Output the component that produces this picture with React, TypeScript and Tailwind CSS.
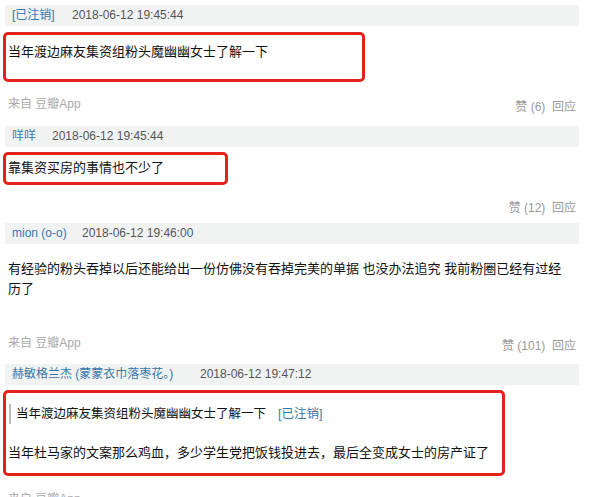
export default function App() {
  const font = { fontFamily: '"Liberation Sans", Arial, "Noto Sans CJK SC", sans-serif' };
  const Band = ({ name, date, nameW }: { name: string; date: string; nameW?: string }) => (
    <div className="ml-[2px] w-[574px] h-[21px] bg-[#f1f3f3] flex items-center pl-[7px] text-[12px] leading-[21px]">
      <span className={`text-[#3a77aa] whitespace-nowrap ${nameW ?? ""}`}>{name}</span>
      <span className="text-[#555]">{date}</span>
    </div>
  );
  const From = () => <span className="text-[#aaa] text-[12px] leading-[18px] pl-[5px]">来自 豆瓣App</span>;
  const Like = ({ n }: { n: string }) => (
    <span className="text-[#999] text-[12px] leading-[18px] pt-[3px] whitespace-pre">{`赞 (${n})  回应`}</span>
  );
  return (
    <div className="w-[600px] h-[497px] overflow-hidden bg-white text-[#111]" style={font}>
      <div className="pl-[3px] pt-[5px] w-[580px] flex flex-col">
        <Band name="[已注销]" date="2018-06-12 19:45:44" nameW="w-[60px]" />
        <div className="mt-[6px] w-[362px] h-[50px] border-[3px] border-[#e3221c] rounded-[5px] pl-[2px] pt-[7px] text-[13px] leading-[20px]">
          当年渡边麻友集资组粉头魔幽幽女士了解一下
        </div>
        <div className="mt-[13px] flex justify-between items-start pr-[4px]">
          <From />
          <Like n="6" />
        </div>
        <div className="mt-[10px]">
          <Band name="咩咩" date="2018-06-12 19:45:44" nameW="w-[40px]" />
        </div>
        <div className="mt-[5px] w-[225px] h-[33px] border-[3px] border-[#e3221c] rounded-[5px] pl-[2px] pt-[3px] text-[13px] leading-[20px]">
          靠集资买房的事情也不少了
        </div>
        <div className="mt-[11px] flex justify-end items-start pr-[4px]">
          <Like n="12" />
        </div>
        <div className="mt-[6px]">
          <Band name="mion (o-o)" date="2018-06-12 19:46:00" nameW="w-[70px]" />
        </div>
        <div className="mt-[15px] pl-[5px] text-[13px] leading-[20px] whitespace-nowrap">
          有经验的粉头吞掉以后还能给出一份仿佛没有吞掉完美的单据 也没办法追究 我前粉圈已经有过经
          <br />
          历了
        </div>
        <div className="mt-[35px] flex justify-between items-start pr-[4px]">
          <From />
          <Like n="101" />
        </div>
        <div className="mt-[9px]">
          <Band name="赫敏格兰杰 (蒙蒙衣巾落枣花。)" date="2018-06-12 19:47:12" nameW="w-[188px]" />
        </div>
        <div className="mt-[5px] w-[502px] h-[86px] border-[3px] border-[#e3221c] rounded-[5px] pt-[11px] text-[13px] leading-[20px]">
          <div className="ml-[3px] border-l-2 border-[#bbb] pl-[5px] flex gap-[12px] whitespace-nowrap text-[12.5px]">
            <span>当年渡边麻友集资组粉头魔幽幽女士了解一下</span>
            <span className="text-[#3a77aa]">[已注销]</span>
          </div>
          <div className="mt-[19px] pl-[2px] whitespace-nowrap">当年杜马家的文案那么鸡血，多少学生党把饭钱投进去，最后全变成女士的房产证了</div>
        </div>
        <div className="mt-[14px] flex">
          <From />
        </div>
      </div>
    </div>
  );
}
